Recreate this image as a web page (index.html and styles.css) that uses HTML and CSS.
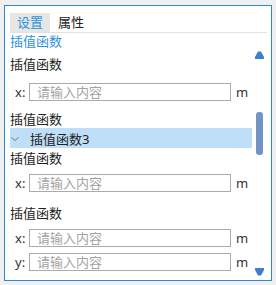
FILE: index.html
```html
<!DOCTYPE html>
<html lang="zh">
<head>
    <meta charset="UTF-8">
    <title>属性面板</title>
    <link rel="stylesheet" href="styles.css">
</head>
<body>
<div class="panel">
    <div class="tabs">
        <span class="tab active">设置</span>
        <span class="tab">属性</span>
    </div>
    <div class="body">
        <div class="content">
            <div class="section-title">插值函数</div>

            <div class="group-label g1">插值函数</div>
            <div class="field f1"><span class="axis">x:</span><input type="text" placeholder="请输入内容"><span class="unit">m</span></div>

            <div class="group-label g2">插值函数</div>
            <div class="tree-row">
                <svg class="chev" width="8" height="4" viewBox="0 0 8 4"><path d="M0.5 0.5 L4 3.5 L7.5 0.5" fill="none" stroke="#777" stroke-width="1"/></svg>
                <span class="tree-text">插值函数3</span>
            </div>
            <div class="group-label g3">插值函数</div>
            <div class="field f2"><span class="axis">x:</span><input type="text" placeholder="请输入内容"><span class="unit">m</span></div>

            <div class="group-label g4">插值函数</div>
            <div class="field f3"><span class="axis">x:</span><input type="text" placeholder="请输入内容"><span class="unit">m</span></div>
            <div class="field f4"><span class="axis">y:</span><input type="text" placeholder="请输入内容"><span class="unit">m</span></div>
        </div>
        <div class="scrollbar">
            <svg class="arrow up" width="9" height="8" viewBox="0 0 9 8"><path d="M3 0.5 L6 0.5 L9 6 L9 8 L0 8 L0 6 Z" fill="#3d7fcc"/></svg>
            <div class="thumb"></div>
            <svg class="arrow down" width="9" height="8" viewBox="0 0 9 8"><path d="M0 0 L9 0 L9 2 L6 7.5 L3 7.5 L0 2 Z" fill="#3d7fcc"/></svg>
        </div>
    </div>
</div>
</body>
</html>
```

FILE: styles.css
```css
body {
    margin: 0;
    background: #f0f0f0;
    font-family: "Noto Sans", "Noto Sans CJK SC", sans-serif;
    font-size: 13px;
    color: #222;
}
.panel {
    box-sizing: border-box;
    width: 268px;
    height: 276px;
    margin: 5px 0 0 4px;
    border: 1px solid #2a8bd2;
    background: #fff;
    display: flex;
    flex-direction: column;
}
.tabs {
    display: flex;
    margin: 7px 4px 0 5px;
    border-bottom: 1px solid #e2e2e2;
}
.tab {
    height: 19px;
    line-height: 19px;
    padding: 0 8px 0 8px;
}
.tab.active {
    width: 40px;
    box-sizing: border-box;
    padding: 0;
    text-align: center;
    background: #e6e6e6;
    color: #2f93d8;
}
.body {
    flex: 1;
    display: flex;
}
.content {
    width: 242px;
    margin-left: 5px;
}
.section-title {
    line-height: 16px;
    color: #2f93d8;
}
.group-label {
    line-height: 16px;
}
.g1 { margin-top: 7px; }
.g2 { margin-top: 10px; }
.g3 { margin-top: 2px; }
.g4 { margin-top: 13px; }
.field {
    display: flex;
    align-items: center;
    height: 18px;
}
.f1 { margin-top: 11px; }
.f2 { margin-top: 8px; }
.f3 { margin-top: 8px; }
.f4 { margin-top: 6px; }
.axis {
    width: 19px;
    box-sizing: border-box;
    padding-left: 5px;
    color: #333;
}
.field input {
    box-sizing: border-box;
    width: 202px;
    height: 18px;
    border: 1px solid #aaa;
    padding: 0 7px;
    margin: 0;
    font-family: inherit;
    font-size: 13px;
    outline: none;
}
.field input::placeholder {
    color: #a3a3a3;
}
.unit {
    margin-left: 5px;
    color: #333;
}
.tree-row {
    margin-top: 1px;
    height: 20px;
    display: flex;
    align-items: center;
    background: #bfdef8;
}
.chev {
    margin-left: 1px;
    margin-top: 1px;
}
.tree-text {
    margin-left: 11px;
}
.scrollbar {
    width: 9px;
    margin-left: 3px;
    display: flex;
    flex-direction: column;
    align-items: center;
}
.arrow.up {
    margin-top: 18px;
}
.thumb {
    width: 7px;
    height: 43px;
    margin-top: 53px;
    border-radius: 3px;
    background: #7393c5;
}
.arrow.down {
    margin-top: auto;
    margin-bottom: 4px;
}
```
